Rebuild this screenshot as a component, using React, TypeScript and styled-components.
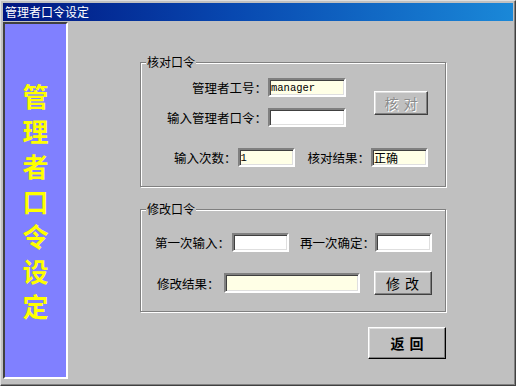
import styled, { createGlobalStyle } from "styled-components";

const GlobalStyle = createGlobalStyle`
  html, body {
    margin: 0;
    padding: 0;
    background: #c0c0c0;
  }
  body {
    font-family: "Noto Sans CJK SC", "Liberation Sans", sans-serif;
    font-size: 12px;
    color: #000;
  }
`;

const Window = styled.div`
  box-sizing: border-box;
  width: 516px;
  height: 386px;
  display: flex;
  flex-direction: column;
  background: #c0c0c0;
  border: 1px solid;
  border-color: #dfdfdf #404040 #404040 #dfdfdf;
  box-shadow: inset -1px -1px 0 #808080;
  padding: 2px;
`;

const TitleBar = styled.div`
  height: 18px;
  line-height: 18px;
  padding-left: 2px;
  color: #fff;
  font-size: 12px;
  background: linear-gradient(to right, #001580, #0848b0 45%, #1a88d8);
`;

const Body = styled.div`
  flex: 1;
  display: flex;
`;

const SidePanel = styled.div`
  box-sizing: border-box;
  width: 65px;
  margin: 1px 0 4px;
  padding-top: 54px;
  background: #8080ff;
  border: 2px solid;
  border-color: #404040 #fff #fff #404040;
  display: flex;
  flex-direction: column;
  align-items: center;
`;

const SideChar = styled.span`
  font-size: 26px;
  line-height: 35px;
  font-weight: 700;
  color: #ffff00;
`;

const Main = styled.div`
  flex: 1;
  padding: 34px 0 0 72px;
`;

const Column = styled.div`
  width: 306px;
  display: flex;
  flex-direction: column;
`;

const Group = styled.fieldset<{ $mt?: number }>`
  box-sizing: border-box;
  width: 306px;
  min-width: 0;
  margin: ${(p) => p.$mt ?? 0}px 0 0;
  padding: 0;
  border: 1px solid #808080;
  box-shadow: inset 1px 1px 0 #fff, 1px 1px 0 #fff;
`;

const Legend = styled.legend`
  margin-left: 5px;
  padding: 0 1px;
  font-size: 12px;
  line-height: 14px;
  background: #c0c0c0;
`;

const TopBlock = styled.div`
  display: flex;
  align-items: center;
  padding-top: 9px;
`;

const FieldGrid = styled.div`
  display: grid;
  grid-template-columns: 126px 78px;
  column-gap: 1px;
  row-gap: 11px;
  align-items: center;
`;

const Row = styled.div<{ $pl: number; $pt?: number; $mt?: number; $pb?: number }>`
  display: flex;
  align-items: center;
  padding: ${(p) => p.$pt ?? 0}px 0 ${(p) => p.$pb ?? 0}px ${(p) => p.$pl}px;
  margin-top: ${(p) => p.$mt ?? 0}px;
`;

const Label = styled.label<{ $ml?: number; $gap?: number }>`
  white-space: nowrap;
  text-align: right;
  font-size: 12.5px;
  line-height: 19px;
  margin-left: ${(p) => p.$ml ?? 0}px;
  margin-right: ${(p) => p.$gap ?? 0}px;
`;

const Field = styled.input<{ $w: number; $h?: number; $cream?: boolean; $mono?: boolean }>`
  box-sizing: border-box;
  width: ${(p) => p.$w}px;
  height: ${(p) => p.$h ?? 19}px;
  margin: 0;
  padding: 0 0 0 1px;
  border: 2px solid;
  border-color: #808080 #fff #fff #808080;
  box-shadow: inset 1px 1px 0 #404040, inset -1px -1px 0 #dfdfdf;
  background: ${(p) => (p.$cream ? "#ffffe6" : "#fff")};
  font-family: ${(p) =>
    p.$mono ? '"Liberation Mono", monospace' : '"Noto Sans CJK SC", sans-serif'};
  font-size: ${(p) => (p.$mono ? 10.5 : 12)}px;
  color: #000;
  outline: none;
`;

const Button = styled.button<{ $w: number; $h: number; $ml?: number; $bold?: boolean }>`
  box-sizing: border-box;
  width: ${(p) => p.$w}px;
  height: ${(p) => p.$h}px;
  margin: 0 0 0 ${(p) => p.$ml ?? 0}px;
  padding: 0 0 0 5px;
  background: #c0c0c0;
  border: 1px solid;
  border-color: #fff #404040 #404040 #fff;
  box-shadow: inset -1px -1px 0 #808080, inset 1px 1px 0 #dfdfdf;
  font-family: "Noto Sans CJK SC", sans-serif;
  font-size: 14px;
  font-weight: ${(p) => (p.$bold ? 700 : 400)};
  letter-spacing: 5px;
  color: #000;

  &:disabled {
    color: #8c8c8c;
    text-shadow: 1px 1px 0 #fff;
  }
`;

const BackButton = styled(Button)`
  align-self: flex-end;
  margin-top: 15px;
  border-color: #fff #000 #000 #fff;
`;

const sideText = "管理者口令设定".split("");

export default function App() {
  return (
    <>
      <GlobalStyle />
      <Window>
        <TitleBar>管理者口令设定</TitleBar>
        <Body>
          <SidePanel>
            {sideText.map((c, i) => (
              <SideChar key={i}>{c}</SideChar>
            ))}
          </SidePanel>
          <Main>
            <Column>
              <Group>
                <Legend>核对口令</Legend>
                <TopBlock>
                  <FieldGrid>
                    <Label>管理者工号：</Label>
                    <Field $w={78} $cream $mono readOnly value="manager" />
                    <Label>输入管理者口令：</Label>
                    <Field $w={78} readOnly value="" />
                  </FieldGrid>
                  <Button $w={54} $h={24} $ml={28} disabled>
                    核对
                  </Button>
                </TopBlock>
                <Row $pl={33} $mt={21} $pb={19}>
                  <Label $gap={1}>输入次数：</Label>
                  <Field $w={57} $cream $mono readOnly value="1" />
                  <Label $ml={13} $gap={1}>核对结果：</Label>
                  <Field $w={57} $cream readOnly value="正确" />
                </Row>
              </Group>

              <Group $mt={15}>
                <Legend>修改口令</Legend>
                <Row $pl={14} $pt={17}>
                  <Label $gap={2}>第一次输入：</Label>
                  <Field $w={57} readOnly value="" />
                  <Label $ml={11}>再一次确定：</Label>
                  <Field $w={57} readOnly value="" />
                </Row>
                <Row $pl={16} $mt={19} $pb={16}>
                  <Label $gap={4}>修改结果：</Label>
                  <Field $w={136} $h={20} $cream readOnly value="" />
                  <Button $w={58} $h={24} $ml={14}>
                    修改
                  </Button>
                </Row>
              </Group>

              <BackButton $w={78} $h={32} $bold>
                返回
              </BackButton>
            </Column>
          </Main>
        </Body>
      </Window>
    </>
  );
}
